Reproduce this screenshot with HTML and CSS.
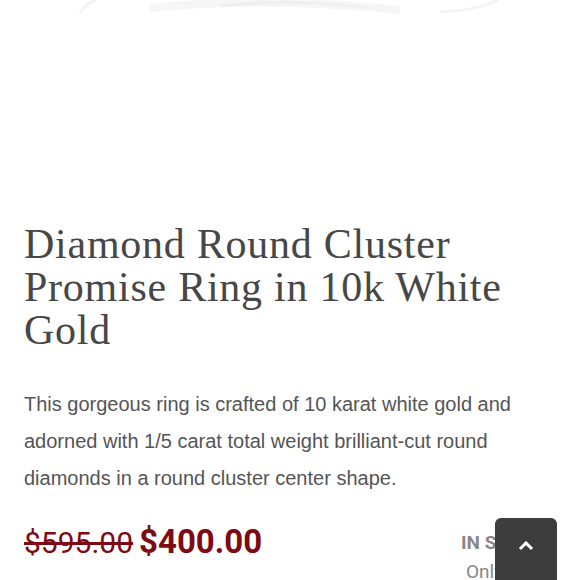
FILE: index.html
```html
<!DOCTYPE html>
<html lang="en">
<head>
	<meta charset="UTF-8">
	<title>Diamond Round Cluster Promise Ring in 10k White Gold</title>
	<link rel="stylesheet" href="styles.css">
</head>
<body>
	<div class="product">
		<div class="photo">
			<svg width="580" height="190" viewBox="0 0 580 190">
				<path d="M80 14 Q84 4 96 0" fill="none" stroke="#f3f3f3" stroke-width="3"/>
				<path d="M150 8 Q260 -4 400 10" fill="none" stroke="#f6f6f6" stroke-width="8"/>
				<path d="M220 6 Q290 -2 370 8" fill="none" stroke="#efefef" stroke-width="3"/>
				<path d="M440 12 Q480 10 498 0" fill="none" stroke="#f4f4f4" stroke-width="3"/>
			</svg>
		</div>
		<h1 class="title">Diamond Round Cluster Promise Ring in 10k White Gold</h1>
		<p class="desc">This gorgeous ring is crafted of 10 karat white gold and adorned with 1/5 carat total weight brilliant-cut round diamonds in a round cluster center shape.</p>
		<div class="buy">
			<div class="price">
				<del class="old">$595.00</del>
				<span class="now">$400.00</span>
			</div>
			<div class="stock">
				<div class="stock-state">IN STOCK</div>
				<div class="stock-note">Only 1 left</div>
			</div>
		</div>
	</div>
	<a href="#" class="to-top">
		<svg width="16" height="10" viewBox="0 0 16 10"><path d="M2 8 L8 2 L14 8" fill="none" stroke="#fff" stroke-width="3"/></svg>
	</a>
</body>
</html>
```
FILE: styles.css
```css
html,
body {
	margin: 0;
	padding: 0;
	background: #fff;
}

.product {
	padding: 0 24px;
	overflow: hidden;
	height: 580px;
}

.photo {
	height: 190px;
	margin: 0 -24px;
	overflow: hidden;
}

.photo svg {
	display: block;
}

.title {
	margin: 33px 0 0;
	font: normal 42px/43px 'Liberation Serif', serif;
	letter-spacing: 0.75px;
	color: #474747;
}

.desc {
	margin: 34px 0 0;
	font: 20px/37px 'Liberation Sans', Arial, sans-serif;
	color: #555;
}

.buy {
	display: flex;
	justify-content: space-between;
	margin-top: 25px;
}

.price {
	font-family: Roboto, sans-serif;
	color: #7d0a14;
}

.old {
	font-size: 30px;
	text-decoration: line-through;
}

.now {
	margin-left: 2px;
	font-size: 33px;
	font-weight: bold;
}

.stock {
	padding: 9px 0 0;
	width: 95px;
	font-family: Roboto, sans-serif;
	color: #888;
}

.stock-state {
	font-size: 19px;
	font-weight: bold;
}

.stock-note {
	margin: 6px 0 0 5px;
	font-size: 19px;
}

.to-top {
	position: fixed;
	left: 495px;
	top: 518px;
	width: 62px;
	height: 70px;
	background: #3d3d3d;
	border-radius: 6px;
	display: flex;
	justify-content: center;
	padding-top: 23px;
	box-sizing: border-box;
}

.to-top svg {
	display: block;
}
```
